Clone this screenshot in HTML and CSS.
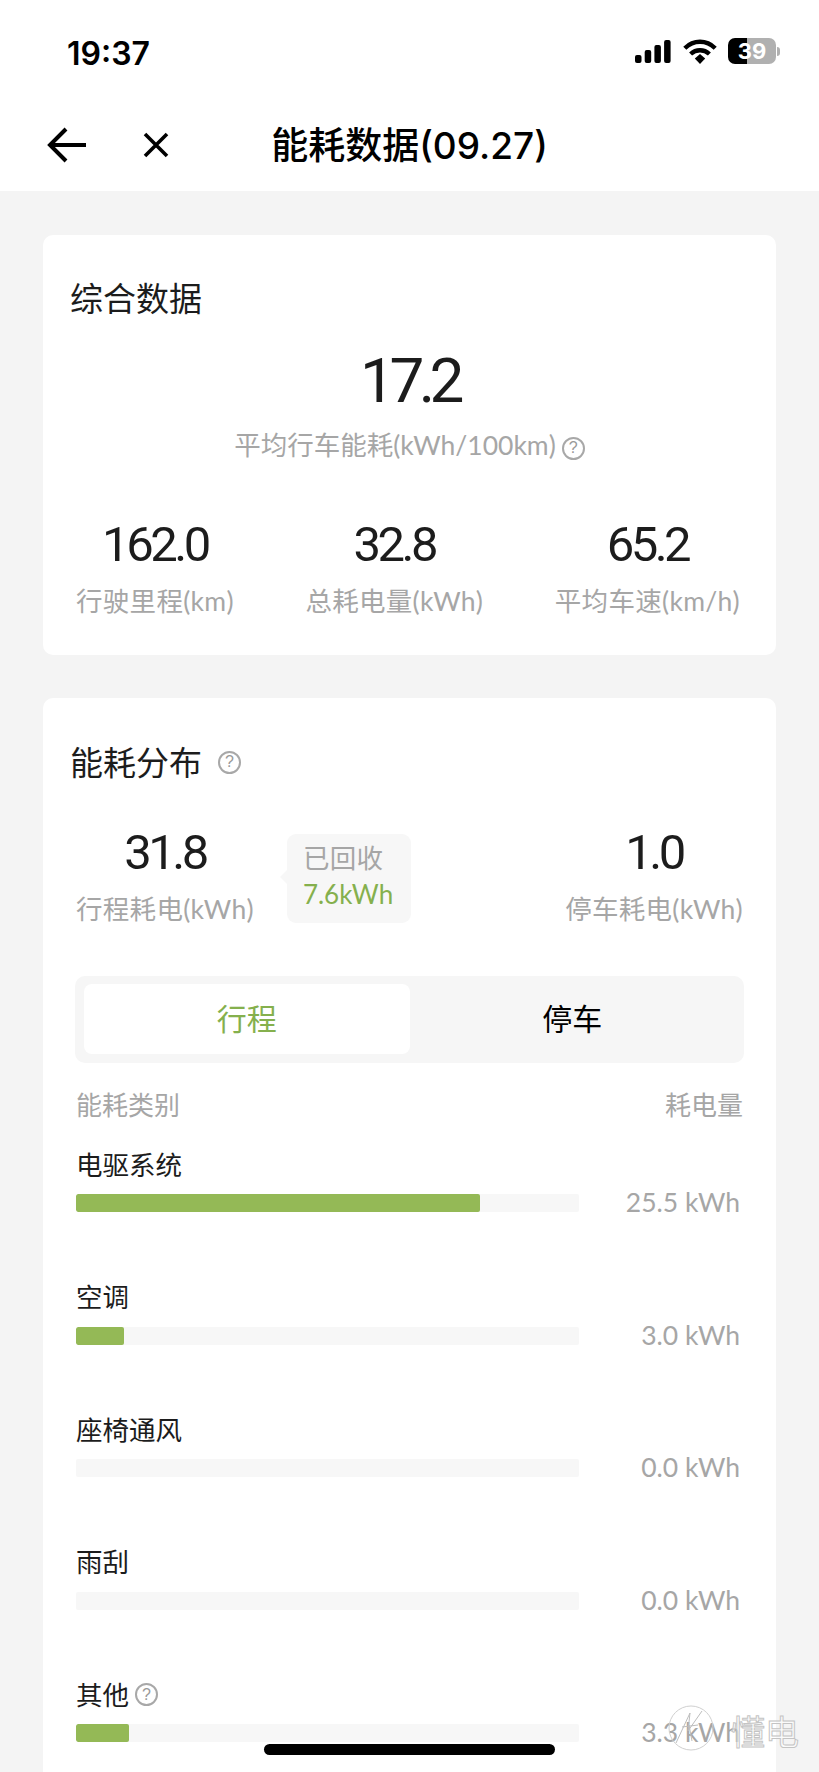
FILE: index.html
```html
<!DOCTYPE html>
<html lang="zh-CN">
<head>
  <meta charset="UTF-8" />
  <meta name="viewport" content="width=device-width, initial-scale=1.0"/>
  <title>能耗数据</title>
  <link rel="stylesheet" href="styles.css">
</head>
<body>

  <div class="status-bar">
    <span class="clock">19:37</span>
    <div class="status-icons">
      <svg class="signal" viewBox="0 0 36 23" width="36" height="23">
        <rect x="0" y="15" width="6.5" height="8" rx="2"/>
        <rect x="9.7" y="10" width="6.5" height="13" rx="2"/>
        <rect x="19.4" y="5" width="6.5" height="18" rx="2"/>
        <rect x="29.1" y="0" width="6.5" height="23" rx="2"/>
      </svg>
      <svg class="wifi" viewBox="0 0 34 25" width="34" height="25">
        <path d="M1.8 9.2 C10.5 0.6 23.5 0.6 32.2 9.2" fill="none" stroke="#000" stroke-width="4.4"/>
        <path d="M7.6 15 C13 10 21 10 26.4 15" fill="none" stroke="#000" stroke-width="4.4"/>
        <path d="M11.8 19.6 L17 15 L22.2 19.6 L17 25 Z"/>
      </svg>
      <div class="battery">39</div>
      <div class="battery-nub"></div>
    </div>
  </div>

  <header class="nav">
    <div class="nav-icons">
      <svg viewBox="0 0 40 36" width="40" height="36">
        <path d="M39 18 H3 M19 2 L3 18 L19 34" fill="none" stroke="#000" stroke-width="4"/>
      </svg>
      <svg viewBox="0 0 26 26" width="26" height="26">
        <path d="M2 2 L24 24 M24 2 L2 24" fill="none" stroke="#000" stroke-width="3.6"/>
      </svg>
    </div>
    <h1>能耗数据(09.27)</h1>
  </header>

  <main class="content">
    <section class="card summary">
      <h2 class="card-title">综合数据</h2>
      <div class="big-value">17.2</div>
      <div class="muted big-label">平均行车能耗(kWh/100km)<span class="help">?</span></div>
      <div class="stats">
        <div class="stat">
          <div class="value">162.0</div>
          <div class="muted">行驶里程(km)</div>
        </div>
        <div class="stat">
          <div class="value">32.8</div>
          <div class="muted">总耗电量(kWh)</div>
        </div>
        <div class="stat">
          <div class="value">65.2</div>
          <div class="muted">平均车速(km/h)</div>
        </div>
      </div>
    </section>

    <section class="card breakdown">
      <h2 class="card-title">能耗分布<span class="help help-title">?</span></h2>

      <div class="usage">
        <div class="stat">
          <div class="value">31.8</div>
          <div class="muted">行程耗电(kWh)</div>
        </div>
        <div class="bubble">
          <div class="muted">已回收</div>
          <div class="green">7.6kWh</div>
        </div>
        <div class="stat usage-right">
          <div class="value">1.0</div>
          <div class="muted">停车耗电(kWh)</div>
        </div>
      </div>

      <div class="tabs">
        <div class="tab active">行程</div>
        <div class="tab">停车</div>
      </div>

      <div class="list-head muted">
        <span>能耗类别</span>
        <span>耗电量</span>
      </div>

      <div class="rows">
        <div class="row">
          <div class="row-name">电驱系统</div>
          <div class="row-data">
            <div class="track"><div class="fill" style="width: 80.3%"></div></div>
            <span class="muted amount">25.5 kWh</span>
          </div>
        </div>
        <div class="row">
          <div class="row-name">空调</div>
          <div class="row-data">
            <div class="track"><div class="fill" style="width: 9.5%"></div></div>
            <span class="muted amount">3.0 kWh</span>
          </div>
        </div>
        <div class="row">
          <div class="row-name">座椅通风</div>
          <div class="row-data">
            <div class="track"></div>
            <span class="muted amount">0.0 kWh</span>
          </div>
        </div>
        <div class="row">
          <div class="row-name">雨刮</div>
          <div class="row-data">
            <div class="track"></div>
            <span class="muted amount">0.0 kWh</span>
          </div>
        </div>
        <div class="row">
          <div class="row-name">其他<span class="help">?</span></div>
          <div class="row-data">
            <div class="track"><div class="fill" style="width: 10.5%"></div></div>
            <span class="muted amount">3.3 kWh</span>
          </div>
        </div>
      </div>
    </section>
  </main>

  <div class="home-bar"></div>

  <div class="stamp">
    <svg viewBox="0 0 46 46" width="46" height="46">
      <circle cx="23" cy="23" r="22" fill="none" stroke="#d0d0d0"/>
      <path d="M8 38 L22 8 L20 26 L34 6 M14 22 L30 20 M21 20 L24 36" fill="none" stroke="#bdbdbd"/>
    </svg>
    <span>懂电</span>
  </div>

</body>
</html>
```

FILE: styles.css
```css
* {
  box-sizing: border-box;
}

body {
  font-family: Lato, "Noto Sans CJK SC", sans-serif;
  background-color: #f4f4f4;
  color: #1c1c1c;
  margin: 0;
  height: 1772px;
  overflow: hidden;
  position: relative;
}

/* status bar */
.status-bar {
  background-color: white;
  height: 100px;
  padding: 35px 43px 0 67px;
  display: flex;
  justify-content: space-between;
  align-items: flex-start;
}

.clock {
  font-family: Inter, sans-serif;
  font-size: 32px;
  font-weight: 600;
  line-height: 38px;
  color: black;
}

.status-icons {
  display: flex;
  align-items: center;
  margin-top: 3px;
}

.signal {
  margin-right: 12px;
}

.wifi {
  margin-right: 11px;
}

.battery {
  width: 48px;
  height: 26px;
  border-radius: 7px;
  background: linear-gradient(to right, black 39%, #b0b0b0 39%);
  color: white;
  font-family: Inter, sans-serif;
  font-size: 22px;
  font-weight: 700;
  line-height: 26px;
  text-align: center;
}

.battery-nub {
  width: 3px;
  height: 9px;
  margin-left: 1px;
  margin-right: -4px;
  background-color: #b0b0b0;
  border-radius: 0 4px 4px 0;
}

/* nav */
.nav {
  background-color: white;
  height: 91px;
  position: relative;
  display: flex;
  justify-content: center;
  align-items: center;
}

.nav h1 {
  margin: 0;
  font-family: Inter, "Noto Sans CJK SC", sans-serif;
  font-size: 37px;
  font-weight: 500;
  line-height: 44px;
  color: black;
}

.nav-icons {
  position: absolute;
  left: 47px;
  top: 27px;
  display: flex;
  align-items: center;
  gap: 56px;
}

/* cards */
.content {
  padding: 44px 43px 0;
  display: flex;
  flex-direction: column;
  gap: 43px;
}

.card {
  background-color: white;
  border-radius: 10px;
  padding: 43px 33px 36px;
}

.card-title {
  margin: 0 0 0 -6px;
  font-size: 33px;
  font-weight: 400;
  line-height: 40px;
  display: flex;
  align-items: center;
}

.muted {
  color: #a6a6a6;
  font-size: 26.5px;
  letter-spacing: 0.3px;
  line-height: 36px;
  white-space: nowrap;
}

.green {
  color: #85b04d;
  font-size: 26px;
  line-height: 36px;
}

.help {
  display: inline-flex;
  justify-content: center;
  align-items: center;
  width: 23px;
  height: 23px;
  margin-left: 6px;
  border: 2.5px solid #a8a8a8;
  border-radius: 50%;
  color: #999;
  font-family: "Liberation Sans", sans-serif;
  font-size: 16px;
  letter-spacing: 0;
  line-height: 1;
  vertical-align: 2px;
}

.help-title {
  margin-left: 16px;
}

.big-value {
  margin-top: 28px;
  font-family: Roboto, sans-serif;
  font-size: 62px;
  line-height: 70px;
  letter-spacing: -5.5px;
  text-align: center;
}

.big-label {
  margin-top: 11px;
  letter-spacing: 0;
  text-align: center;
}

.stats {
  margin-top: 57px;
  padding-right: 3px;
  display: flex;
  justify-content: space-between;
}

.stat {
  text-align: center;
}

.value {
  font-family: Roboto, sans-serif;
  font-size: 49px;
  line-height: 50px;
  letter-spacing: -3.5px;
  margin-bottom: 13px;
}

/* trip and parking totals */
.breakdown {
  padding-top: 44px;
  padding-bottom: 200px;
}

.usage {
  margin-top: 46px;
  display: flex;
  align-items: flex-start;
}

.usage-right {
  margin-left: auto;
}

.bubble {
  position: relative;
  width: 124px;
  height: 89px;
  margin: 6px 0 0 33px;
  padding: 6px 16px;
  background-color: #f7f7f7;
  border-radius: 9px;
}

.bubble::before {
  content: "";
  position: absolute;
  left: -7px;
  top: 36px;
  border-top: 7px solid transparent;
  border-bottom: 7px solid transparent;
  border-right: 7px solid #f7f7f7;
}

/* trip / parking switch */
.tabs {
  margin: 49px -1px 0;
  height: 87px;
  padding: 8px 9px 9px;
  background-color: #f6f6f6;
  border-radius: 10px;
  display: grid;
  grid-template-columns: 1fr 1fr;
}

.tab {
  display: flex;
  justify-content: center;
  align-items: center;
  padding-bottom: 4px;
  border-radius: 8px;
  font-size: 30px;
  color: black;
}

.tab.active {
  background-color: white;
  color: #85b04d;
}

/* category list */
.list-head {
  margin-top: 24px;
  font-size: 26px;
  letter-spacing: 0;
  display: flex;
  justify-content: space-between;
}

.rows {
  margin-top: 23.5px;
  display: flex;
  flex-direction: column;
  gap: 58px;
}

.row-name {
  font-size: 26.5px;
  line-height: 36px;
  margin-bottom: 2.5px;
  display: flex;
  align-items: center;
}

.row-data {
  height: 36px;
  padding-right: 3px;
  display: flex;
  justify-content: space-between;
  align-items: center;
}

.amount {
  padding-bottom: 2px;
  letter-spacing: 0;
}

.track {
  width: 503px;
  height: 18px;
  background-color: #f7f7f7;
  border-radius: 2px;
  overflow: hidden;
}

.fill {
  height: 100%;
  background-color: #94b956;
  border-radius: 2px;
}

/* floats over the page */
.home-bar {
  position: absolute;
  left: 264px;
  top: 1744px;
  width: 291px;
  height: 11px;
  background-color: black;
  border-radius: 6px;
}

.stamp {
  position: absolute;
  left: 668px;
  top: 1705px;
  display: flex;
  align-items: flex-end;
  gap: 17px;
}

.stamp span {
  font-size: 34px;
  line-height: 38px;
  color: rgba(255, 255, 255, 0.6);
  -webkit-text-stroke: 1px #c4c4c4;
}
```
